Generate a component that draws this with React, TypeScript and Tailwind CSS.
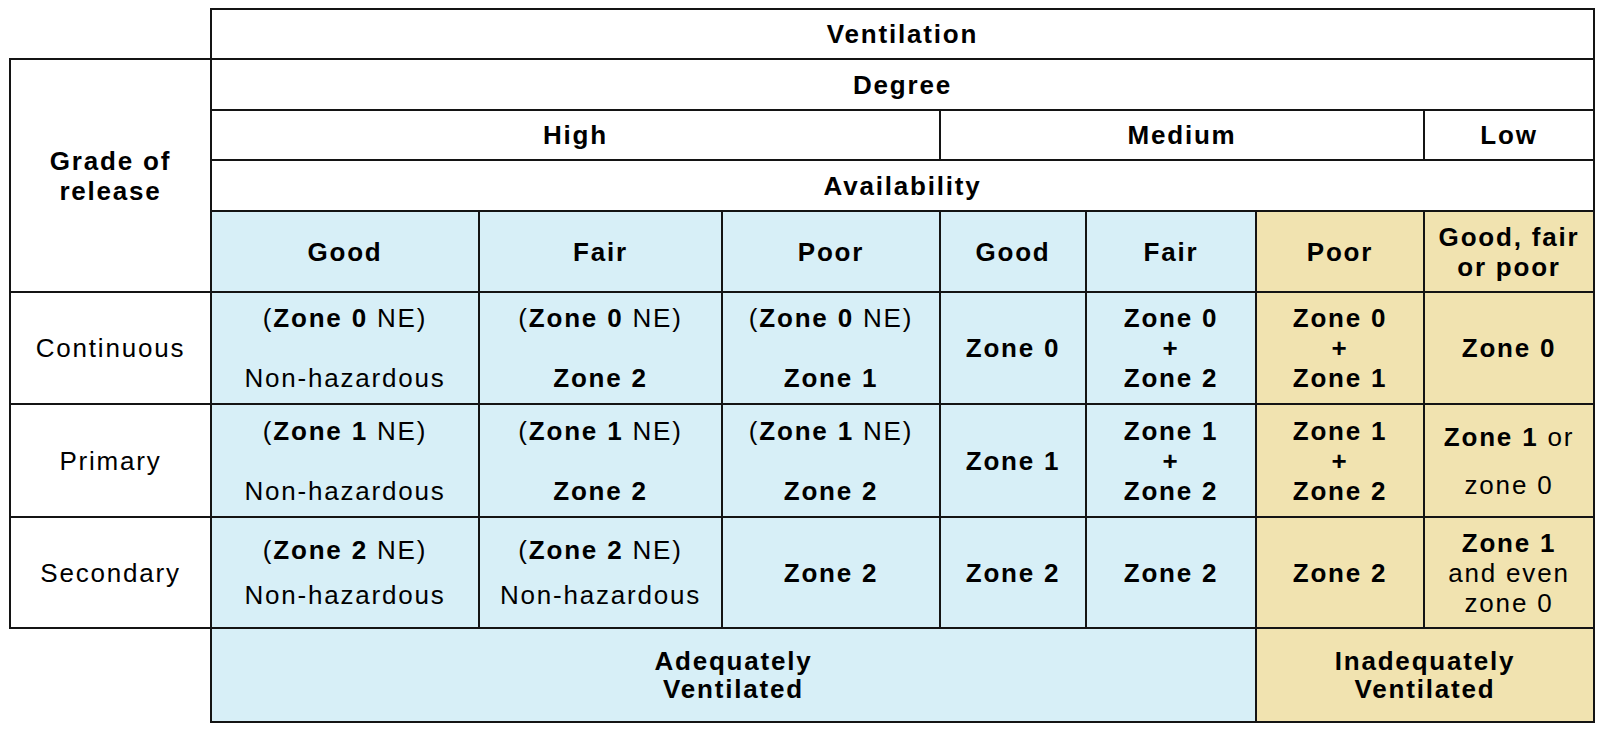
import { ReactNode } from 'react'

const blue = 'bg-[#d7eff7]'
const tan = 'bg-[#f1e3b0]'

function Cell({ className = '', children }: { className?: string; children?: ReactNode }) {
    return (
        <div className={`flex flex-col items-center justify-center text-center border-[#141414] ${className}`}>
            {children}
        </div>
    )
}

const B = ({ children }: { children: ReactNode }) => <span className="font-bold">{children}</span>

function NeCell({ zone, second, bold, tight }: { zone: string; second: string; bold?: boolean; tight?: boolean }) {
    return (
        <Cell className={`border-r-2 border-b-2 ${blue} ${tight ? 'gap-[15px]' : 'gap-[30px]'}`}>
            <span>
                (<B>Zone {zone}</B> NE)
            </span>
            <span className={bold ? 'font-bold' : ''}>{second}</span>
        </Cell>
    )
}

function Plus({ a, b, bg }: { a: string; b: string; bg: string }) {
    return (
        <Cell className={`border-r-2 border-b-2 font-bold ${bg}`}>
            <span>{a}</span>
            <span>+</span>
            <span>{b}</span>
        </Cell>
    )
}

export default function App() {
    return (
        <div className="min-h-screen bg-white pl-[9px] pt-[8px] text-[26px] leading-[30px] tracking-[1.8px] text-black [font-family:'Liberation_Sans',Arial,sans-serif]">
            <div className="grid w-max grid-cols-[203px_268px_243px_218px_146px_170px_168px_170px] grid-rows-[52px_51px_50px_51px_81px_112px_113px_111px_94px]">
                {/* header */}
                <Cell className="border-r-2 border-b-2" />
                <Cell className="col-span-7 border-t-2 border-r-2 border-b-2 font-bold">Ventilation</Cell>

                <Cell className="row-span-4 border-l-2 border-r-2 border-b-2 font-bold">
                    <span>Grade of</span>
                    <span>release</span>
                </Cell>
                <Cell className="col-span-7 border-r-2 border-b-2 font-bold">Degree</Cell>

                <Cell className="col-span-3 border-r-2 border-b-2 font-bold">High</Cell>
                <Cell className="col-span-3 border-r-2 border-b-2 font-bold">Medium</Cell>
                <Cell className="border-r-2 border-b-2 font-bold">Low</Cell>

                <Cell className="col-span-7 border-r-2 border-b-2 font-bold">Availability</Cell>

                <Cell className={`border-r-2 border-b-2 font-bold ${blue}`}>Good</Cell>
                <Cell className={`border-r-2 border-b-2 font-bold ${blue}`}>Fair</Cell>
                <Cell className={`border-r-2 border-b-2 font-bold ${blue}`}>Poor</Cell>
                <Cell className={`border-r-2 border-b-2 font-bold ${blue}`}>Good</Cell>
                <Cell className={`border-r-2 border-b-2 font-bold ${blue}`}>Fair</Cell>
                <Cell className={`border-r-2 border-b-2 font-bold ${tan}`}>Poor</Cell>
                <Cell className={`border-r-2 border-b-2 font-bold ${tan}`}>
                    <span>Good, fair</span>
                    <span>or poor</span>
                </Cell>

                {/* continuous */}
                <Cell className="border-l-2 border-r-2 border-b-2">Continuous</Cell>
                <NeCell zone="0" second="Non-hazardous" />
                <NeCell zone="0" second="Zone 2" bold />
                <NeCell zone="0" second="Zone 1" bold />
                <Cell className={`border-r-2 border-b-2 font-bold ${blue}`}>Zone 0</Cell>
                <Plus a="Zone 0" b="Zone 2" bg={blue} />
                <Plus a="Zone 0" b="Zone 1" bg={tan} />
                <Cell className={`border-r-2 border-b-2 font-bold ${tan}`}>Zone 0</Cell>

                {/* primary */}
                <Cell className="border-l-2 border-r-2 border-b-2">Primary</Cell>
                <NeCell zone="1" second="Non-hazardous" />
                <NeCell zone="1" second="Zone 2" bold />
                <NeCell zone="1" second="Zone 2" bold />
                <Cell className={`border-r-2 border-b-2 font-bold ${blue}`}>Zone 1</Cell>
                <Plus a="Zone 1" b="Zone 2" bg={blue} />
                <Plus a="Zone 1" b="Zone 2" bg={tan} />
                <Cell className={`border-r-2 border-b-2 gap-[18px] ${tan}`}>
                    <span>
                        <B>Zone 1</B> or
                    </span>
                    <span>zone 0</span>
                </Cell>

                {/* secondary */}
                <Cell className="border-l-2 border-r-2 border-b-2">Secondary</Cell>
                <NeCell zone="2" second="Non-hazardous" tight />
                <NeCell zone="2" second="Non-hazardous" tight />
                <Cell className={`border-r-2 border-b-2 font-bold ${blue}`}>Zone 2</Cell>
                <Cell className={`border-r-2 border-b-2 font-bold ${blue}`}>Zone 2</Cell>
                <Cell className={`border-r-2 border-b-2 font-bold ${blue}`}>Zone 2</Cell>
                <Cell className={`border-r-2 border-b-2 font-bold ${tan}`}>Zone 2</Cell>
                <Cell className={`border-r-2 border-b-2 ${tan}`}>
                    <span className="font-bold">Zone 1</span>
                    <span>and even</span>
                    <span>zone 0</span>
                </Cell>

                {/* footer */}
                <Cell className="border-r-2" />
                <Cell className={`col-span-5 border-r-2 border-b-2 font-bold leading-[28px] ${blue}`}>
                    <span>Adequately</span>
                    <span>Ventilated</span>
                </Cell>
                <Cell className={`col-span-2 border-r-2 border-b-2 font-bold leading-[28px] ${tan}`}>
                    <span>Inadequately</span>
                    <span>Ventilated</span>
                </Cell>
            </div>
        </div>
    )
}
